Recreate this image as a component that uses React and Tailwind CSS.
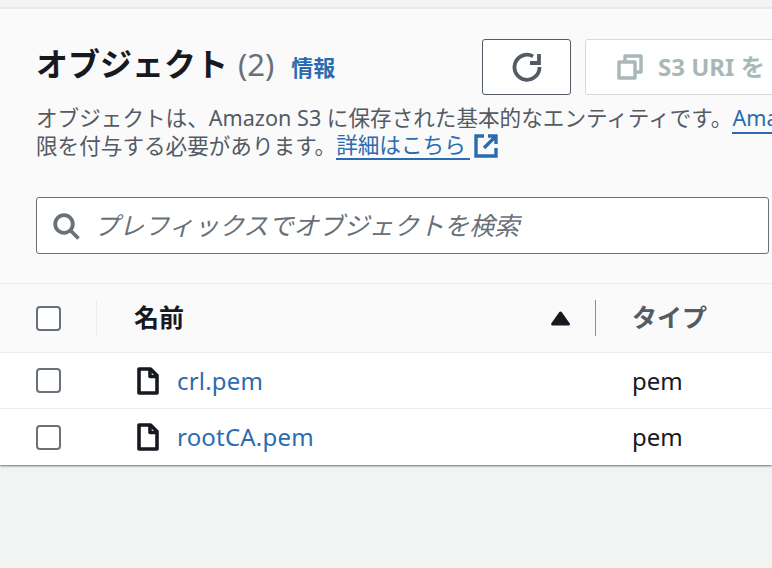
import React from "react";

const FONT = "font-['Noto_Sans','Noto_Sans_CJK_JP',sans-serif]";

const Checkbox = () => (
  <span className="block w-[25px] h-[25px] rounded-[4px] border-2 border-[#687078] bg-white" />
);

const FileIcon = () => (
  <svg viewBox="0 0 22 28" className="w-[22px] h-[28px] text-[#16191f]" fill="none" stroke="currentColor" strokeWidth="3.6">
    <path d="M2 2h11.5L20 8.5V26H2z" strokeLinejoin="round" />
    <path d="M13 2v7.5h7" strokeLinejoin="round" />
  </svg>
);

const Row = ({ name }) => (
  <div className="grid grid-cols-[97px_499px_1fr] h-[56px] items-center bg-white border-b border-[#eaeded] last:border-b-0">
    <div className="pl-[36px] flex">
      <Checkbox />
    </div>
    <div className="flex items-center pl-[40px] gap-[18px]">
      <FileIcon />
      <span className="text-[24px] tracking-[0.2px] text-[#2b6cb0] leading-none">{name}</span>
    </div>
    <div className="pl-[36px] text-[24px] text-[#16191f] leading-none">pem</div>
  </div>
);

export default function App() {
  return (
    <div className={`w-[772px] h-[568px] overflow-hidden bg-[#f2f3f3] pt-[8px] ${FONT}`}>
      <div className="bg-[#fafafa] border-t border-[#eaeded] shadow-[0_1px_2px_#687078]">
        <div className="pl-[36px] pt-[30px] pb-[29px] border-b border-[#eaeded]">
          <div className="flex items-start h-[56px] w-[900px]">
            <div className="flex items-baseline w-[446px] pt-[3px]">
              <h1 className="text-[32px] font-bold leading-[44px] text-[#16191f]">オブジェクト</h1>
              <span className="text-[31px] leading-[44px] text-[#687078] ml-[10px]">(2)</span>
              <span className="text-[22px] font-bold text-[#2b6cb0] ml-[17px]">情報</span>
            </div>
            <button className="w-[89px] h-[56px] rounded-[3px] border border-[#545b64] bg-white flex items-center justify-center">
              <svg viewBox="0 0 32 32" className="w-[32px] h-[32px] text-[#545b64]" fill="none" stroke="currentColor" strokeWidth="3.8">
                <path d="M28.5 16A12.5 12.5 0 1 1 22 5.3" />
                <path d="M28 3v9h-9" />
              </svg>
            </button>
            <button className="ml-[14px] w-[300px] h-[56px] rounded-[3px] border border-[#d5dbdb] bg-white flex items-center pl-[31px] text-[#aab7b8] text-[24px] font-bold">
              <svg viewBox="0 0 26 26" className="w-[26px] h-[26px] mr-[15px]" fill="none" stroke="currentColor" strokeWidth="3.4">
                <path d="M2 8h16v16H2z" strokeLinejoin="round" />
                <path d="M8 8V2h16v16h-6" strokeLinejoin="round" />
              </svg>
              S3 URI を
            </button>
          </div>
          <div className="mt-[9px] w-[760px] h-[56px] text-[21.6px] leading-[28px] text-[#545b64] overflow-hidden">
            <div className="whitespace-nowrap">
              オブジェクトは、Amazon S3 に保存された基本的なエンティティです。
              <span className="text-[#2b6cb0] border-b-2 border-[#2b6cb0]">Amazon</span>
            </div>
            <div className="whitespace-nowrap flex items-center h-[28px]">
              限を付与する必要があります。
              <span className="text-[#2b6cb0] border-b-2 border-[#2b6cb0] pr-[4px] leading-[26px]">詳細はこちら</span>
              <svg viewBox="0 0 26 26" className="w-[26px] h-[26px] text-[#2b6cb0] ml-[3px]" fill="none" stroke="currentColor" strokeWidth="3.4">
                <path d="M11 3H3v20h20v-8" />
                <path d="M15 3h8v8M23 3 11 15" />
              </svg>
            </div>
          </div>
          <div className="mt-[37px] w-[733px] h-[57px] rounded-[3px] border border-[#687078] bg-white flex items-center pl-[15px]">
            <svg viewBox="0 0 28 28" className="w-[28px] h-[28px] text-[#687078]" fill="none" stroke="currentColor" strokeWidth="3.8">
              <circle cx="12" cy="12" r="8.8" />
              <path d="m18.5 18.5 8 8" />
            </svg>
            <span className="ml-[14px] text-[25.1px] italic text-[#687078] whitespace-nowrap">プレフィックスでオブジェクトを検索</span>
          </div>
        </div>

        <div className="grid grid-cols-[97px_499px_1fr] h-[69px] items-center bg-[#fafafa] border-b border-[#eaeded]">
          <div className="pl-[36px] h-[36px] flex items-center border-r border-[#eaeded]">
            <Checkbox />
          </div>
          <div className="h-[36px] flex items-center justify-between pl-[37px] pr-[25px] border-r border-[#879196]">
            <span className="text-[25px] font-bold text-[#16191f]">名前</span>
            <svg viewBox="0 0 20 16" className="w-[19px] h-[15px] text-[#16191f]" fill="currentColor">
              <path d="M10 2 18.5 14H1.5z" stroke="currentColor" strokeWidth="3" strokeLinejoin="round" />
            </svg>
          </div>
          <div className="pl-[36px] text-[25px] font-bold text-[#545b64]">タイプ</div>
        </div>

        <Row name="crl.pem" />
        <Row name="rootCA.pem" />
      </div>
    </div>
  );
}
